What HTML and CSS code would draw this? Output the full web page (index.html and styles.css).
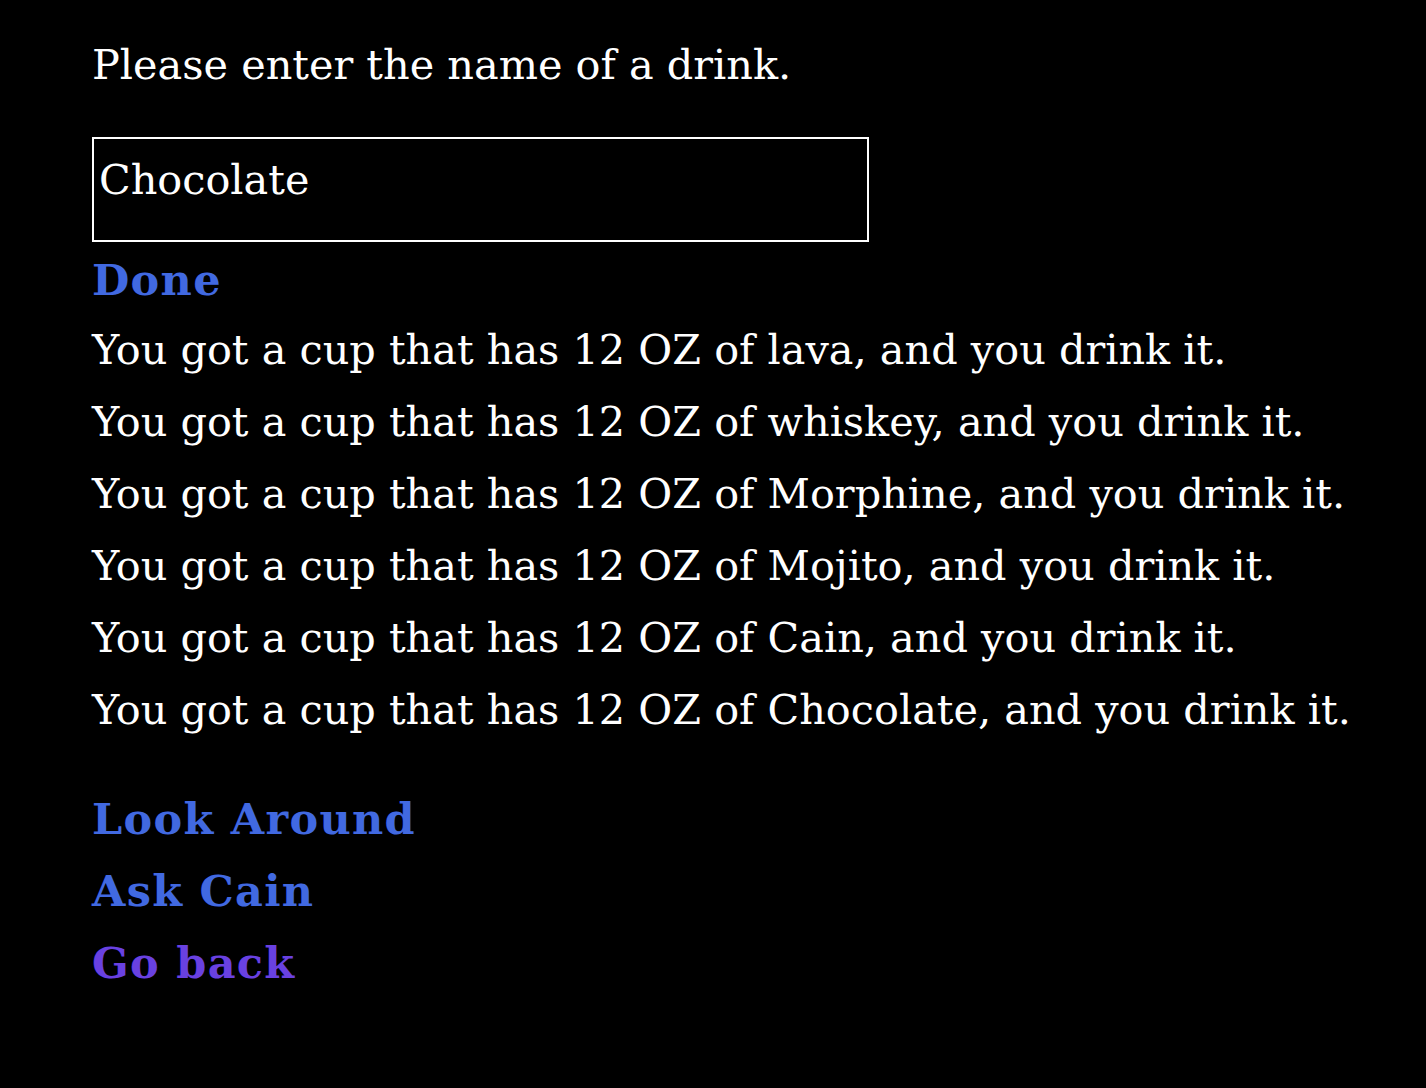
FILE: index.html
```html
<!DOCTYPE html>
<html><head><link rel="stylesheet" href="styles.css"></head>
<body>
<main class="story">
  <div class="line">Please enter the name of a drink.</div>
  <input class="drink" type="text" value="Chocolate">
  <div class="done"><a class="link" href="#">Done</a></div>
  <div class="log">
    <div class="line">You got a cup that has 12 OZ of lava, and you drink it.</div>
    <div class="line">You got a cup that has 12 OZ of whiskey, and you drink it.</div>
    <div class="line">You got a cup that has 12 OZ of Morphine, and you drink it.</div>
    <div class="line">You got a cup that has 12 OZ of Mojito, and you drink it.</div>
    <div class="line">You got a cup that has 12 OZ of Cain, and you drink it.</div>
    <div class="line">You got a cup that has 12 OZ of Chocolate, and you drink it.</div>
  </div>
  <nav class="links">
    <a class="link" href="#">Look Around</a>
    <a class="link" href="#">Ask Cain</a>
    <a class="link visited" href="#">Go back</a>
  </nav>
</main>
</body></html>
```
FILE: styles.css
```css
html, body { margin: 0; background: #000; }
body { color: #fff; font-family: "DejaVu Serif", "Liberation Serif", serif; font-size: 41.4px; line-height: 72px; }
.story { padding: 29px 0 0 92px; }
.line { height: 72px; white-space: nowrap; }
.drink {
  display: block; box-sizing: border-box; margin: 36px 0 0 0;
  width: 777px; height: 105px; padding: 0 5px 19px 5px;
  background: #000; color: #fff; border: 2px solid #fff; border-radius: 0;
  font: inherit; line-height: normal; outline: none;
}
.done { margin-top: 2px; height: 70px; }
.link { color: #4169e1; font-weight: bold; text-decoration: none; font-size: 43px; letter-spacing: 1.3px; }
.link.visited { color: #6941e1; }
.links { display: flex; flex-direction: column; align-items: flex-start; margin-top: 37px; }
.links .link { height: 72px; }
```
